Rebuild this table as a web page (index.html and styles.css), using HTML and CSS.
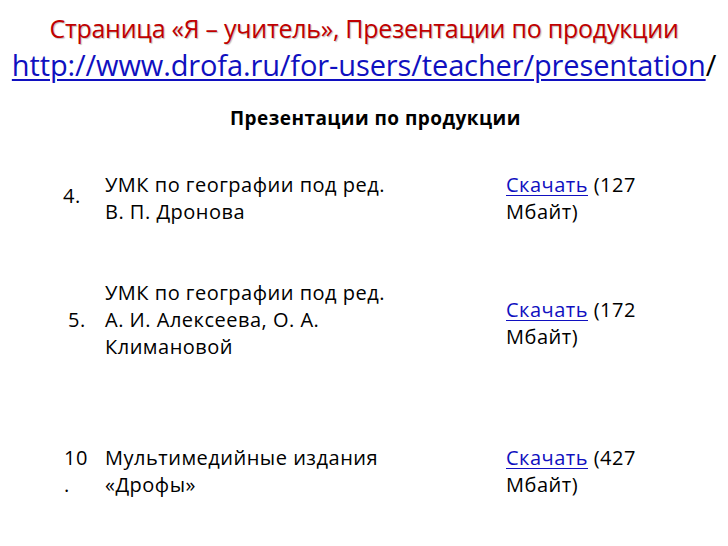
FILE: index.html
```html
<!DOCTYPE html>
<html lang="ru">
<head>
<meta charset="utf-8">
<link rel="stylesheet" href="styles.css">
</head>
<body>
<div class="slide">
  <header class="head">
    <h1 class="title">Страница «Я – учитель», Презентации по продукции</h1>
    <p class="url"><a class="link" href="#">http://www.drofa.ru/for-users/teacher/presentation</a>/</p>
  </header>
  <h2 class="subtitle">Презентации по продукции</h2>
  <div class="rows">
    <div class="row row-1">
      <div class="num">4.</div>
      <div class="name">УМК по географии под ред.<br>В. П. Дронова</div>
      <div class="dl"><a class="link" href="#">Скачать</a> (127<br>Мбайт)</div>
    </div>
    <div class="row row-2">
      <div class="num">5.</div>
      <div class="name">УМК по географии под ред.<br>А. И. Алексеева, О. А.<br>Климановой</div>
      <div class="dl"><a class="link" href="#">Скачать</a> (172<br>Мбайт)</div>
    </div>
    <div class="row row-3">
      <div class="num">10<br>.</div>
      <div class="name">Мультимедийные издания<br>«Дрофы»</div>
      <div class="dl"><a class="link" href="#">Скачать</a> (427<br>Мбайт)</div>
    </div>
  </div>
</div>
</body>
</html>
```
FILE: styles.css
```css
html, body {
  margin: 0;
  padding: 0;
  background: #fff;
}
body {
  font-family: "Open Sans", "Noto Sans", sans-serif;
  color: #000;
  width: 728px;
  height: 546px;
  overflow: hidden;
}
.slide {
  display: flex;
  flex-direction: column;
}
.head {
  display: flex;
  flex-direction: column;
  align-items: center;
  padding-top: 10px;
}
.title {
  margin: 0;
  font-weight: 400;
  font-size: 25px;
  line-height: 36px;
  letter-spacing: -0.25px;
  color: #c00000;
  text-shadow: 1px 1px 1px rgba(0,0,0,0.25);
}
.url {
  margin: 0;
  font-size: 29px;
  line-height: 37px;
  letter-spacing: -0.12px;
}
.link {
  color: #1010c0;
  text-decoration: underline;
  text-underline-offset: 3px;
  text-decoration-thickness: 1px;
}
.url .link {
  text-decoration-thickness: 2px;
}
.subtitle {
  margin: 0;
  padding: 25px 0 0 230px;
  font-size: 19px;
  font-weight: 700;
  line-height: 20px;
  letter-spacing: 0.45px;
}
.rows {
  display: flex;
  flex-direction: column;
  padding-left: 54px;
  font-size: 20px;
  line-height: 27px;
  letter-spacing: 0.5px;
}
.row {
  display: grid;
  grid-template-columns: 51px 401px 180px;
  align-items: center;
}
.row-1 { margin-top: 43px; }
.row-1 .num { padding-bottom: 5px; }
.row-2 { margin-top: 54px; }
.row-2 .dl { padding-top: 7px; }
.row-3 { margin-top: 84px; align-items: start; }
.num {
  padding-left: 9px;
}
.row-2 .num { padding-left: 14px; }
.row-3 .num { padding-left: 10px; }
```
